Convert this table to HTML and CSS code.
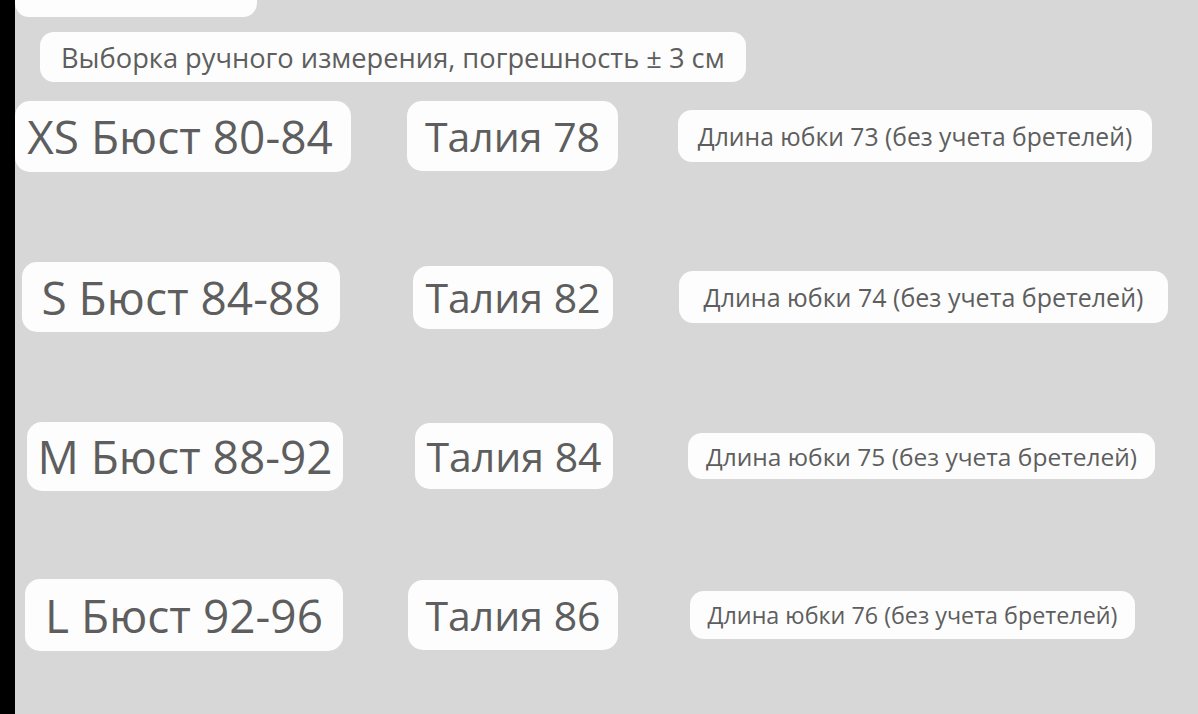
FILE: index.html
```html
<!DOCTYPE html>
<html lang="ru">
<head>
<meta charset="utf-8">
<title>Размеры</title>
<link rel="stylesheet" href="styles.css">
</head>
<body>
<div class="page">
  <div class="edge"></div>
  <main class="sheet">
    <div class="cut-pill"></div>
    <div class="note">Выборка ручного измерения, погрешность ± 3 см</div>

    <div class="row row-xs">
      <div class="pill size size-xs">XS Бюст 80-84</div>
      <div class="pill waist waist-xs">Талия 78</div>
      <div class="pill len len-xs">Длина юбки 73 (без учета бретелей)</div>
    </div>

    <div class="row row-s">
      <div class="pill size size-s">S Бюст 84-88</div>
      <div class="pill waist waist-s">Талия 82</div>
      <div class="pill len len-s">Длина юбки 74 (без учета бретелей)</div>
    </div>

    <div class="row row-m">
      <div class="pill size size-m">M Бюст 88-92</div>
      <div class="pill waist waist-m">Талия 84</div>
      <div class="pill len len-m">Длина юбки 75 (без учета бретелей)</div>
    </div>

    <div class="row row-l">
      <div class="pill size size-l">L Бюст 92-96</div>
      <div class="pill waist waist-l">Талия 86</div>
      <div class="pill len len-l">Длина юбки 76 (без учета бретелей)</div>
    </div>
  </main>
</div>
</body>
</html>
```

FILE: styles.css
```css
html, body {
  margin: 0;
  padding: 0;
  height: 100%;
}

body {
  background: #d6d6d6;
  font-family: "Open Sans", "Noto Sans", sans-serif;
  color: #5e5e5e;
  overflow: hidden;
}

.page {
  display: flex;
  height: 714px;
}

.edge {
  width: 15px;
  flex: none;
  background: #000;
}

.sheet {
  flex: 1;
  display: flex;
  flex-direction: column;
  background: #d7d7d7;
}

.cut-pill {
  width: 242px;
  height: 17px;
  background: #fdfdfd;
  border-radius: 0 0 14px 14px;
}

.note {
  align-self: flex-start;
  margin: 15px 0 0 25px;
  width: 706px;
  height: 50px;
  padding-left: 21px;
  box-sizing: border-box;
  background: #fdfdfd;
  border-radius: 14px;
  display: flex;
  align-items: center;
  font-size: 27.25px;
  white-space: nowrap;
}

.row {
  display: flex;
  align-items: center;
  height: 72px;
}

.row-xs { margin-top: 18px; }
.row-s { margin-top: 89px; }
.row-m { margin-top: 87px; }
.row-l { margin-top: 87px; }

.pill {
  flex: none;
  background: #fdfdfd;
  border-radius: 15px;
  display: flex;
  align-items: center;
  justify-content: center;
  white-space: nowrap;
  box-sizing: border-box;
}

.size { font-size: 46px; }
.waist { font-size: 41px; }
.len { font-size: 24.7px; border-radius: 14px; }

/* XS row */
.size-xs { margin-left: 0; width: 336px; height: 71px; padding-right: 6px; }
.waist-xs { margin-left: 56px; width: 211px; height: 70px; }
.len-xs { margin-left: 60px; width: 474px; height: 52px; }

/* S row */
.size-s { margin-left: 7px; width: 318px; height: 70px; }
.waist-s { margin-left: 73px; width: 200px; height: 63px; }
.len-s { margin-left: 66px; width: 489px; height: 52px; font-size: 25px; }

/* M row */
.size-m { margin-left: 12px; width: 316px; height: 69px; }
.waist-m { margin-left: 72px; width: 198px; height: 66px; }
.len-m { margin-left: 75px; width: 467px; height: 46px; font-size: 24.5px; }

/* L row */
.size-l { margin-left: 10px; width: 318px; height: 72px; }
.waist-l { margin-left: 65px; width: 210px; height: 70px; }
.len-l { margin-left: 72px; width: 445px; height: 48px; font-size: 23.3px; }
```
